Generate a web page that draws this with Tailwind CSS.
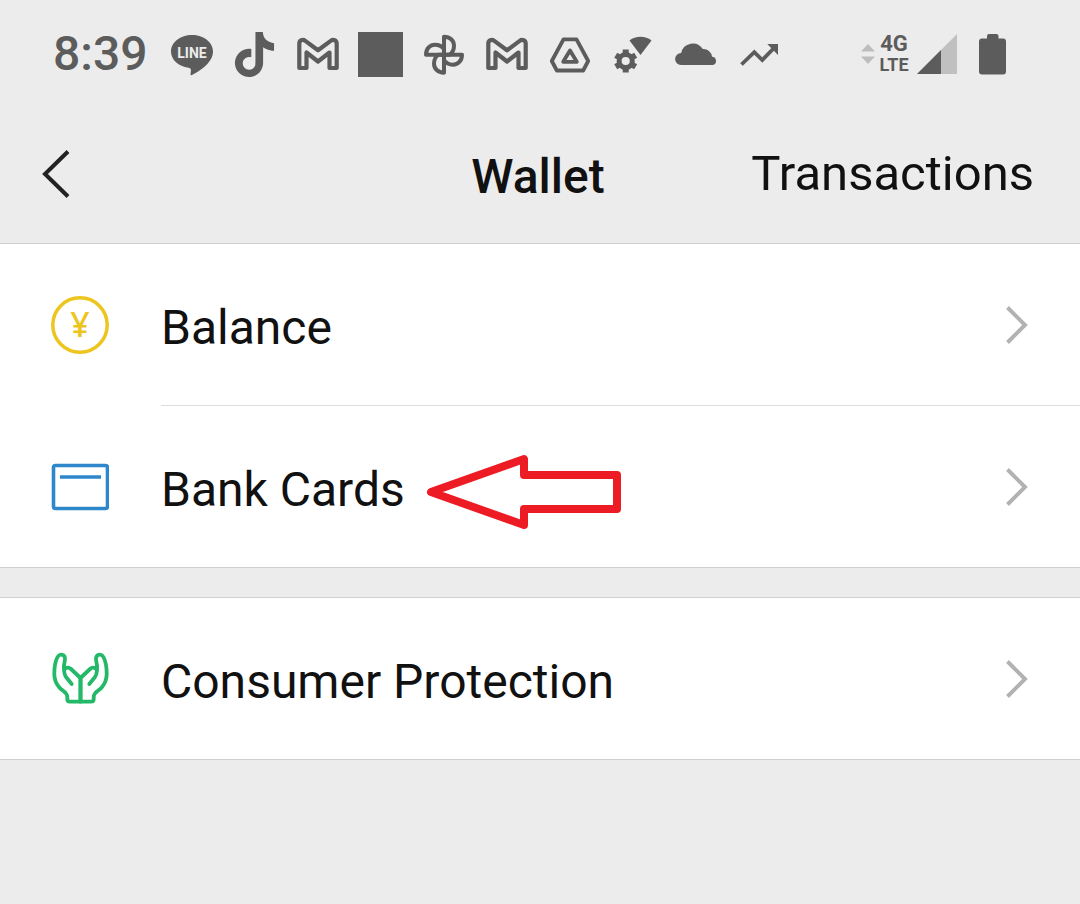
<!DOCTYPE html>
<html lang="en">
  <head>
    <meta charset="UTF-8" />
    <meta name="viewport" content="width=device-width, initial-scale=1" />
    <title>Wallet</title>
    <script src="https://cdn.jsdelivr.net/npm/@tailwindcss/browser@4"></script>
  </head>
  <body class="min-h-screen bg-[#ececec] font-[Roboto,sans-serif] text-5xl text-[#111111]">
    <!-- Status bar -->
    <div class="flex h-[108px] items-center justify-between pl-[53px] pr-[74px] text-[#5c5c5c]">
      <div class="flex items-center gap-[18px]">
        <span class="mr-1 w-[94px] font-medium">8:39</span>
        <svg class="size-[45px]" viewBox="0 0 45 45" fill="currentColor" role="img" aria-label="LINE">
          <path d="M23 3C11.400 3 2 10.300 2 19.500c0 8.200 7.500 15 17.500 16.300 2.200.4 2.600 1.400 2.400 3.200l-.4 3.300c0 .9.600 1.200 1.500.7C30 39.500 44 31 44 19.500 44 10.300 34.600 3 23 3z" />
          <text x="23" y="26" text-anchor="middle" class="fill-[#ececec] text-sm font-bold">LINE</text>
        </svg>
        <svg class="size-[45px]" viewBox="0 0 24 24" fill="currentColor">
          <path d="M12.525.02c1.310-.02 2.610-.01 3.910-.02.08 1.530.63 3.090 1.750 4.170 1.120 1.110 2.700 1.620 4.240 1.790v4.030c-1.440-.05-2.890-.35-4.200-.97-.57-.26-1.100-.59-1.620-.93-.01 2.920.01 5.840-.02 8.750-.08 1.400-.54 2.790-1.350 3.940-1.310 1.920-3.580 3.170-5.910 3.210-1.430.08-2.860-.31-4.080-1.030-2.020-1.190-3.440-3.370-3.650-5.710-.02-.5-.03-1-.01-1.490.18-1.900 1.120-3.720 2.580-4.960 1.660-1.440 3.980-2.130 6.150-1.720.02 1.480-.04 2.960-.04 4.440-.99-.32-2.150-.23-3.020.37-.63.41-1.110 1.040-1.360 1.750-.21.51-.15 1.070-.14 1.610.24 1.640 1.820 3.020 3.500 2.870 1.120-.01 2.190-.66 2.770-1.610.19-.33.4-.67.41-1.060.1-1.790.06-3.570.07-5.360.01-4.030-.01-8.050.02-12.070z" />
        </svg>
        <svg class="size-[45px]" viewBox="0 0 45 45" fill="none" stroke="currentColor" stroke-width="4.200" stroke-linejoin="round">
          <path d="M4.300 11.500c0-3.300 3.500-4.500 6-2.600L23 18.300l12.700-9.400c2.500-1.900 6-.7 6 2.600V36H34.500V20.500L23 29.500l-11.500-9V36H4.300z" />
        </svg>
        <div class="size-[45px] bg-[#5c5c5c]"></div>
        <svg class="size-[45px]" viewBox="0 0 45 45" fill="none" stroke="currentColor" stroke-width="4" stroke-linejoin="round">
          <path id="blade" d="M23 22.700V4.700c6 0 10 4 10 9 0 4-1.500 7-4.500 9z" />
          <use href="#blade" transform="rotate(90 23 22.700)" />
          <use href="#blade" transform="rotate(180 23 22.700)" />
          <use href="#blade" transform="rotate(270 23 22.700)" />
        </svg>
        <svg class="size-[45px]" viewBox="0 0 45 45" fill="none" stroke="currentColor" stroke-width="4.200" stroke-linejoin="round">
          <path d="M4.300 11.500c0-3.300 3.500-4.500 6-2.600L23 18.300l12.700-9.400c2.500-1.900 6-.7 6 2.600V36H34.500V20.500L23 29.500l-11.500-9V36H4.300z" />
        </svg>
        <svg class="size-[45px]" viewBox="0 0 45 45" fill="none" stroke="currentColor" stroke-width="3.800" stroke-linejoin="round">
          <path d="M16.500 7.300h13L41.200 29l-5 9.500H9.800L4.800 29z" />
          <path d="M23 18.500l6.800 11.300H16.200z" />
        </svg>
        <svg class="size-[45px]" viewBox="0 0 45 45" fill="currentColor">
          <path d="M19.500 8.500c6-5 16-5 22 0L30.500 23z" />
          <circle cx="15.700" cy="29" r="6.600" fill="none" stroke="currentColor" stroke-width="5" />
          <g stroke="currentColor" stroke-width="6">
            <path d="M15.700 17.500v5M15.700 35.500v5" />
            <path d="M15.700 17.500v5M15.700 35.500v5" transform="rotate(60 15.700 29)" />
            <path d="M15.700 17.500v5M15.700 35.500v5" transform="rotate(120 15.700 29)" />
          </g>
        </svg>
        <svg class="size-[45px]" viewBox="0 0 45 45" fill="currentColor">
          <path d="M8 33a6 6 0 0 1 .2-12 11.800 11.800 0 0 1 21.600-4 8.500 8.500 0 0 1 9.200 7.700A4.200 4.200 0 0 1 39.700 33z" />
        </svg>
        <svg class="size-[45px]" viewBox="0 0 45 45" fill="none" stroke="currentColor" stroke-width="3.800">
          <path d="M5.500 32.500l12.800-12.300 8 7.800L39 15" />
          <path d="M31.300 12H42v11z" fill="currentColor" stroke="none" />
        </svg>
      </div>

      <div class="flex items-center gap-1">
        <svg class="h-5 w-[14px] text-[#bdbdbd]" viewBox="0 0 14 20" fill="currentColor">
          <path d="M0 7.500L7 0l7 7.500zM0 12.500L7 20l7-7.500z" />
        </svg>
        <div class="mr-1 w-[30px] text-center text-[22px] leading-[21px] font-bold">
          <div>4G</div>
          <div class="text-lg leading-[21px]">LTE</div>
        </div>
        <svg class="mr-[18px] size-10" viewBox="0 0 40 40" fill="currentColor">
          <path d="M40 0v40H0z" class="fill-[#c0c0c0]" />
          <path d="M24 16v24H0z" />
        </svg>
        <svg class="h-[41px] w-[27px]" viewBox="0 0 27 41" fill="currentColor">
          <path d="M8 2a2 2 0 0 1 2-2h7.500a2 2 0 0 1 2 2v2.500H24a3 3 0 0 1 3 3V37.500a3 3 0 0 1-3 3H3a3 3 0 0 1-3-3V7.500a3 3 0 0 1 3-3h5z" />
        </svg>
      </div>
    </div>

    <header class="grid h-[136px] grid-cols-[1fr_auto_1fr] items-center border-b border-[#d0d0d0] pr-[46px] pl-[42px]">
      <button type="button" aria-label="Back" class="w-7 pb-1">
        <svg class="h-12 w-7" viewBox="0 0 28 48" fill="none" stroke="#222222" stroke-width="4">
          <path d="M26 1.500L3 24l23 22.500" />
        </svg>
      </button>
      <h1 class="pt-0.5 font-medium">Wallet</h1>
      <a href="#transactions" class="justify-self-end pb-1 text-[49px] leading-12">Transactions</a>
    </header>

    <main>
      <nav class="border-b border-[#d0d0d0] bg-white">
        <a href="#balance" class="flex h-[161px] items-center gap-[52px] pr-[52px] pl-[51px]">
          <svg class="size-[58px]" viewBox="0 0 58 58" fill="none">
            <circle cx="29" cy="29" r="27.200" stroke="#edc51f" stroke-width="3.500" />
            <text x="29" y="41" text-anchor="middle" class="fill-[#edc51f] font-['Noto_Sans',sans-serif] text-[34px] font-medium">¥</text>
          </svg>
          <span class="flex-1 pt-1.5">Balance</span>
          <svg class="h-[38px] w-[22px]" viewBox="0 0 22 38" fill="none" stroke="#b2b2b2" stroke-width="4">
            <path d="M1.500 1.500L19 19 1.500 36.500" />
          </svg>
        </a>
        <div class="ml-[161px] border-t border-[#dedede]"></div>
        <a href="#bank-cards" class="flex h-[161px] items-center gap-[52px] pr-[52px] pl-[51px]">
          <svg class="size-[58px]" viewBox="0 0 58 58" fill="none" stroke="#2f87cb" stroke-width="3.600">
            <rect x="2.500" y="7.500" width="54" height="43" rx="2" />
            <path d="M9 19h41" />
          </svg>
          <span class="flex flex-1 items-center gap-[22px] pt-1.5">
            Bank Cards
            <svg class="h-[78px] w-[194px]" viewBox="0 0 194 78" fill="none" stroke="#ed1c24" stroke-width="8" stroke-linejoin="round">
              <path d="M4 41L97 8v16h93v34H97v16z" />
            </svg>
          </span>
          <svg class="h-[38px] w-[22px]" viewBox="0 0 22 38" fill="none" stroke="#b2b2b2" stroke-width="4">
            <path d="M1.500 1.500L19 19 1.500 36.500" />
          </svg>
        </a>
      </nav>

      <nav class="mt-[29px] border-y border-[#d0d0d0] bg-white">
        <a href="#consumer-protection" class="flex h-[161px] items-center gap-[52px] pr-[52px] pl-[51px]">
          <svg class="size-[58px]" viewBox="0 0 58 58" fill="none" stroke="#23b968" stroke-width="3.800" stroke-linecap="round" stroke-linejoin="round">
            <path id="hand" d="M29.500 51.700H19c-2 0-2.700-1-2.700-2.700v-2c0-5-4.500-5.500-8-9.500C4.500 33 3.300 29 3.300 24c0-6 .7-12 3-16.500C8 4.300 10.500 4 12.300 5.200c2.200 1.500 2 4 1.300 6.800-.8 3-1 5.500-.6 8 .3 3 .3 5 2 7l5.700 7M13 20c2-2.700 4.700-3 7-1l9.500 9v23.700" />
            <use href="#hand" transform="translate(59 0) scale(-1 1)" />
          </svg>
          <span class="flex-1 pt-1.5">Consumer Protection</span>
          <svg class="h-[38px] w-[22px]" viewBox="0 0 22 38" fill="none" stroke="#b2b2b2" stroke-width="4">
            <path d="M1.500 1.500L19 19 1.500 36.500" />
          </svg>
        </a>
      </nav>
    </main>
  </body>
</html>
